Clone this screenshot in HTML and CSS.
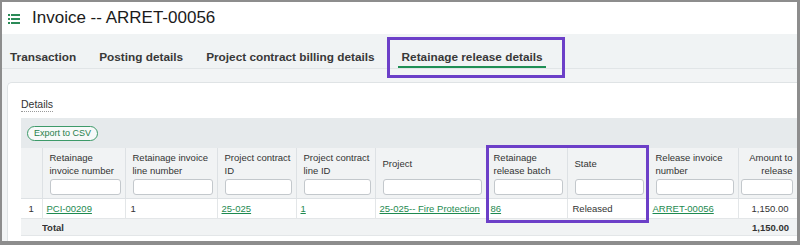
FILE: index.html
```html
<!DOCTYPE html>
<html lang="en">

<head>
    <meta charset="UTF-8">
    <title>Invoice -- ARRET-00056</title>
    <link rel="stylesheet" href="styles.css">
</head>

<body>
    <div class="frame">

        <header class="titlebar">
            <svg class="titlebar__icon" width="12" height="10" viewBox="0 0 12 10">
                <rect x="0" y="0" width="2" height="2" />
                <rect x="3" y="0" width="9" height="2" />
                <rect x="0" y="4" width="2" height="2" />
                <rect x="3" y="4" width="9" height="2" />
                <rect x="0" y="8" width="2" height="2" />
                <rect x="3" y="8" width="9" height="2" />
            </svg>
            <h1 class="titlebar__title">Invoice -- ARRET-00056</h1>
        </header>

        <nav class="tabs">
            <a class="tab">Transaction</a>
            <a class="tab">Posting details</a>
            <a class="tab">Project contract billing details</a>
            <a class="tab tab--active"><span>Retainage release details</span></a>
        </nav>

        <main class="content">
            <section class="card">
                <h2 class="card__title">Details</h2>

                <div class="grid">
                    <div class="grid__toolbar">
                        <button class="btn-export">Export to CSV</button>
                    </div>

                    <table class="grid__table">
                        <colgroup>
                            <col style="width: 21px">
                            <col style="width: 83px">
                            <col style="width: 92px">
                            <col style="width: 79px">
                            <col style="width: 79px">
                            <col style="width: 111px">
                            <col style="width: 81px">
                            <col style="width: 81px">
                            <col style="width: 90px">
                            <col style="width: 59px">
                        </colgroup>
                        <thead>
                            <tr>
                                <th class="rownum"></th>
                                <th><div class="label">Retainage invoice number</div><input type="text"></th>
                                <th><div class="label">Retainage invoice line number</div><input type="text"></th>
                                <th><div class="label">Project contract ID</div><input type="text"></th>
                                <th><div class="label">Project contract line ID</div><input type="text"></th>
                                <th><div class="label">Project</div><input type="text"></th>
                                <th><div class="label">Retainage release batch</div><input type="text"></th>
                                <th><div class="label">State</div><input type="text"></th>
                                <th><div class="label">Release invoice number</div><input type="text"></th>
                                <th class="num"><div class="label">Amount to release</div><input type="text"></th>
                            </tr>
                        </thead>
                        <tbody>
                            <tr class="row">
                                <td class="rownum">1</td>
                                <td><a class="link">PCI-00209</a></td>
                                <td>1</td>
                                <td><a class="link">25-025</a></td>
                                <td><a class="link">1</a></td>
                                <td><a class="link">25-025-- Fire Protection</a></td>
                                <td><a class="link">86</a></td>
                                <td>Released</td>
                                <td><a class="link">ARRET-00056</a></td>
                                <td class="num">1,150.00</td>
                            </tr>
                            <tr class="row row--total">
                                <td></td>
                                <td class="total-label">Total</td>
                                <td></td>
                                <td></td>
                                <td></td>
                                <td></td>
                                <td></td>
                                <td></td>
                                <td></td>
                                <td class="num">1,150.00</td>
                            </tr>
                        </tbody>
                    </table>

                    <div class="callout"></div>
                </div>
            </section>
        </main>
    </div>
</body>

</html>
```

FILE: styles.css
```css
html {
    box-sizing: border-box;
}

*,
*:before,
*:after {
    box-sizing: inherit;
}

body {
    margin: 0;
    padding: 0;
    font-family: "Liberation Sans", Arial, sans-serif;
    color: #333;
    background: #fff;
}

.frame {
    width: 800px;
    height: 245px;
    overflow: hidden;
    border-style: solid;
    border-color: #8d8d8d;
    border-width: 2px 3px 4px 2px;
    background: #f2f4f5;
}

/* title */

.titlebar {
    display: flex;
    align-items: center;
    height: 32px;
    padding-left: 6px;
    background: #fff;
}

.titlebar__icon {
    fill: #2b8a57;
    margin-top: 1px;
}

.titlebar__title {
    margin: 0 0 0 12px;
    font-size: 17px;
    font-weight: normal;
    color: #1b1b1b;
}

/* tabs */

.tabs {
    display: flex;
    align-items: flex-start;
    height: 35px;
    padding: 16px 0 0 8px;
    background: #f0f3f4;
    border-bottom: 1px solid #e1e5e7;
}

.tab {
    font-size: 11.8px;
    line-height: 14px;
    font-weight: bold;
    color: #383838;
    margin-right: 23px;
    white-space: nowrap;
}

.tab--active {
    position: relative;
}

.tab--active span {
    display: block;
    padding: 0 3px 2px 4px;
    border-bottom: 2px solid #1f8f55;
}

/* the purple call-out round the active tab */
.tab--active:after {
    content: "";
    position: absolute;
    left: -11px;
    top: -13px;
    right: -19px;
    bottom: -10px;
    border: 3px solid #6c3fc8;
}

/* card */

.content {
    padding: 13px 0 0 5px;
}

.card {
    background: #fff;
    border: 1px solid #dfe3e5;
    border-right: 0;
    border-radius: 5px 0 0 0;
    padding: 15px 0 10px 13px;
}

.card__title {
    width: fit-content;
    margin: 0;
    font-size: 10.5px;
    line-height: 13px;
    font-weight: normal;
    color: #333;
    border-bottom: 1px dotted #9a9a9a;
}

.grid {
    position: relative;
    margin-top: 6px;
}

.grid__toolbar {
    display: flex;
    align-items: center;
    height: 30px;
    padding-left: 6px;
    background: #e6eaec;
}

.btn-export {
    height: 15px;
    padding: 0 6px;
    font-family: inherit;
    font-size: 9px;
    line-height: 13px;
    color: #1f7f4c;
    background: #f7f9f9;
    border: 1px solid #3d9a69;
    border-radius: 8px;
}

.grid__table {
    width: 776px;
    table-layout: fixed;
    border-collapse: collapse;
    font-size: 9.5px;
}

.grid__table th {
    padding: 2px 4px 3px 7px;
    vertical-align: top;
    text-align: left;
    font-weight: normal;
    color: #333;
    background: #f1f3f4;
    border-right: 1px solid #dde1e4;
    border-bottom: 1px solid #dde1e4;
}

.grid__table th.num {
    padding-left: 2px;
    text-align: right;
}

.label {
    display: flex;
    align-items: center;
    height: 29px;
    line-height: 12.5px;
}

.num .label {
    justify-content: flex-end;
}

.grid__table input {
    display: block;
    width: 100%;
    height: 16px;
    margin: 0;
    border: 1px solid #c3c8cc;
    border-radius: 3px;
    background: #fff;
}

.grid__table td {
    height: 20px;
    padding: 0 5px;
    white-space: nowrap;
    overflow: hidden;
    border-right: 1px solid #e3e6e8;
    border-bottom: 1px solid #e3e6e8;
}

.grid__table td.rownum {
    padding: 0;
    text-align: center;
}

.grid__table td.num {
    text-align: right;
    padding-right: 8px;
}

.link {
    margin-left: -1px;
    color: #1e8a50;
    text-decoration: underline;
}

.row--total td {
    height: 17px;
    background: #f1f3f4;
    border-right: 0;
    font-weight: bold;
}

.grid__table td.total-label {
    padding-left: 0;
}

/* the purple call-out over the batch and state columns */
.callout {
    position: absolute;
    left: 465px;
    top: 27px;
    width: 163px;
    height: 78px;
    border: 3px solid #6c3fc8;
}
```
